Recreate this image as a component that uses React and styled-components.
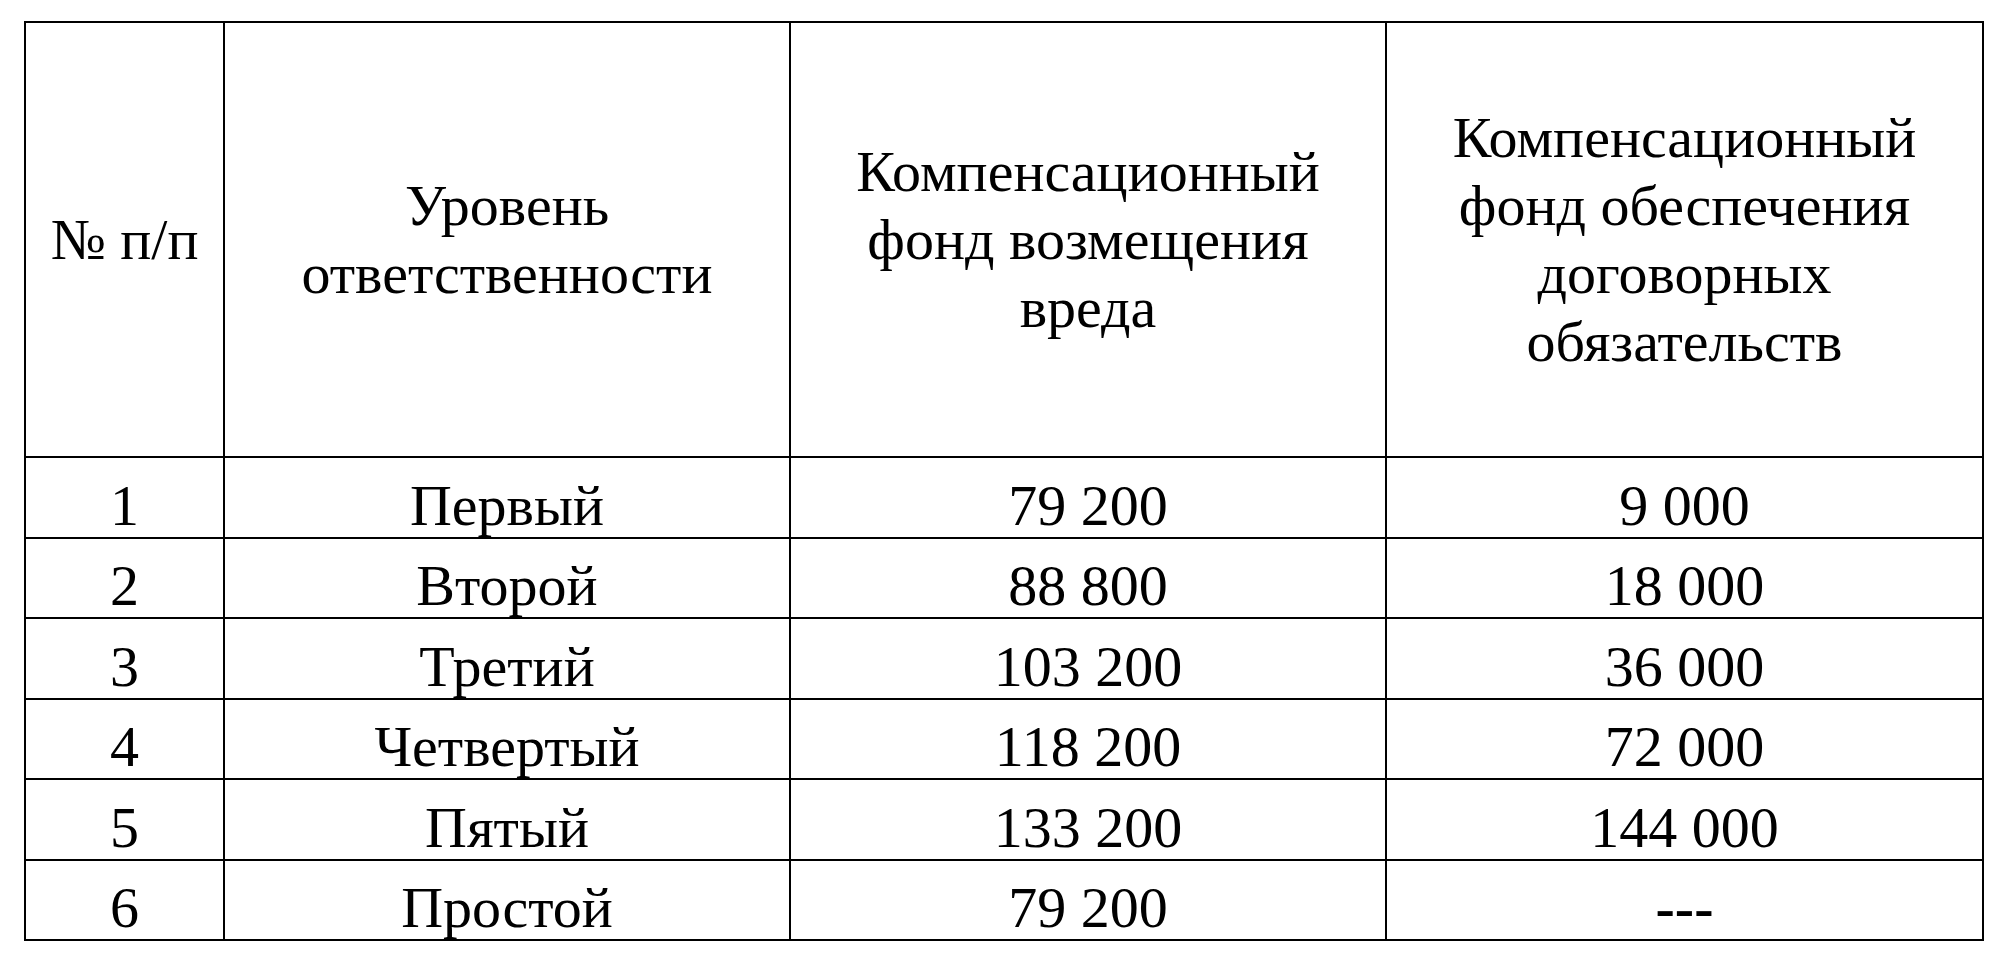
import React from 'react';
import styled, { createGlobalStyle } from 'styled-components';

const GlobalStyle = createGlobalStyle`
  html, body {
    margin: 0;
    padding: 0;
    background: #fff;
  }
  body {
    font-family: "Liberation Serif", "Times New Roman", serif;
    color: #000;
  }
`;

const Page = styled.div`
  padding: 21px 0 0 24px;
`;

const Table = styled.table`
  border-collapse: collapse;
  table-layout: fixed;
  width: 1958px;
  font-size: 58px;
  line-height: 68px;
`;

const HeadCell = styled.th`
  border: 2px solid #000;
  height: 433px;
  padding: 0 8px;
  font-weight: normal;
  text-align: center;
  vertical-align: middle;
`;

const Cell = styled.td`
  border: 2px solid #000;
  padding: 16.5px 8px 0;
  text-align: center;
  vertical-align: middle;
  white-space: nowrap;
  line-height: 62px;
`;

const Dash = styled.span`
  font-weight: bold;
`;

const columns = [199, 566, 596, 597];

const rows = [
  ['1', 'Первый', '79 200', '9 000'],
  ['2', 'Второй', '88 800', '18 000'],
  ['3', 'Третий', '103 200', '36 000'],
  ['4', 'Четвертый', '118 200', '72 000'],
  ['5', 'Пятый', '133 200', '144 000'],
  ['6', 'Простой', '79 200', null],
];

const App = () => (
  <>
    <GlobalStyle />
    <Page>
      <Table>
        <colgroup>
          {columns.map((w, i) => (
            <col key={i} style={{ width: w }} />
          ))}
        </colgroup>
        <thead>
          <tr>
            <HeadCell>№ п/п</HeadCell>
            <HeadCell>
              Уровень
              <br />
              ответственности
            </HeadCell>
            <HeadCell>
              Компенсационный
              <br />
              фонд возмещения
              <br />
              вреда
            </HeadCell>
            <HeadCell>
              Компенсационный
              <br />
              фонд обеспечения
              <br />
              договорных
              <br />
              обязательств
            </HeadCell>
          </tr>
        </thead>
        <tbody>
          {rows.map((r) => (
            <tr key={r[0]}>
              <Cell>{r[0]}</Cell>
              <Cell>{r[1]}</Cell>
              <Cell>{r[2]}</Cell>
              <Cell>{r[3] ?? <Dash>---</Dash>}</Cell>
            </tr>
          ))}
        </tbody>
      </Table>
    </Page>
  </>
);

export default App;
